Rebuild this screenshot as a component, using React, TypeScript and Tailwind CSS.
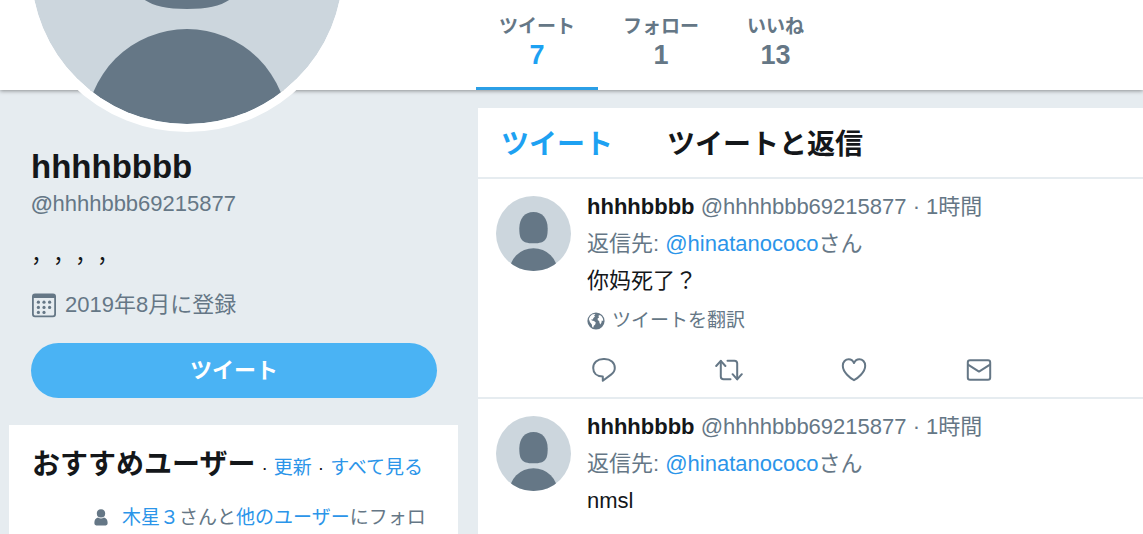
import React from "react";

function DefaultAvatar({ className, label }: { className: string; label: string }) {
  const id = React.useId();
  return (
    <svg viewBox="0 0 312 312" className={className} role="img" aria-label={label}>
      <clipPath id={id}>
        <circle cx="156" cy="156" r="156" />
      </clipPath>
      <g clipPath={`url(#${id})`}>
        <rect width="312" height="312" fill="#ccd6dd" />
        <path
          d="M156 67C193 67 215 95 215 134C215 176 209 197 156 197C103 197 97 176 97 134C97 95 119 67 156 67Z"
          fill="#657786"
        />
        <circle cx="156" cy="318" r="101" fill="#657786" />
      </g>
    </svg>
  );
}

const calendarRows = [
  { y: 10.2, xs: [7.4, 13, 18.6] },
  { y: 15.4, xs: [7.4, 13, 18.6] },
  { y: 20.4, xs: [7.4, 13] },
];

function CalendarIcon() {
  return (
    <svg viewBox="0 0 26 26" className="size-[26px] shrink-0" fill="#657786" aria-hidden="true">
      <path
        fillRule="evenodd"
        d="M4 1.5H22Q25 1.5 25 4.5V22.3Q25 25.3 22 25.3H4Q1 25.3 1 22.3V4.5Q1 1.5 4 1.5ZM2.8 6V22Q2.8 23.6 4.4 23.6H21.6Q23.2 23.6 23.2 22V6Z"
      />
      {calendarRows.map(({ y, xs }) => xs.map((x) => <circle key={`${x}-${y}`} cx={x} cy={y} r="1.6" />))}
    </svg>
  );
}

function GlobeIcon() {
  return (
    <svg viewBox="0 0 18 18" className="size-[18px] shrink-0" aria-hidden="true">
      <circle cx="9" cy="9" r="8.6" fill="#657786" />
      <path
        fill="#fff"
        d="M1.8 7L3 4.4L5 2.6L7.4 2L8.4 2.8L7 3.6L8 4.6L6.4 6L5.8 7.4L4.4 7.2L4.8 8.6L7 9L8.8 10.4L8.2 12.4L6.8 13.8L6.2 15.8L5.2 15L4.8 12.4L3 10.2ZM11.4 3.8L13 3L14.8 4.6L16 6.8L16.2 9L14.8 8.6L14.4 10.8L13.2 12.4L12.4 10.6L12.2 9L10.8 8.2L10.6 6.6L12 5.6Z"
      />
    </svg>
  );
}

const actionIcons: { label: string; paths: string[] }[] = [
  {
    label: "返信",
    paths: [
      "M13.5 3H14.5C20.7 3 24.8 6.8 24.8 12C24.8 14.8 23.4 16.9 21 18.6L12.8 24.8V20.4C6.5 20.4 3.2 16.8 3.2 12C3.2 6.8 7.3 3 13.5 3Z",
    ],
  },
  {
    label: "リツイート",
    paths: ["M1.2 10L5.8 4.8L10.4 10", "M5.8 5V20.5Q5.8 23.3 8.6 23.3H15.5", "M12.5 4.8H19.4Q22.2 4.8 22.2 7.6V23", "M17.6 18.2L22.2 23.4L26.8 18.2"],
  },
  {
    label: "いいね",
    paths: ["M14 24.2C10.5 22.4 2.8 16.4 2.8 9.8C2.8 5.8 5.5 3.2 8.7 3.2C11 3.2 12.9 4.6 14 7C15.1 4.6 17 3.2 19.3 3.2C22.5 3.2 25.2 5.8 25.2 9.8C25.2 16.4 17.5 22.4 14 24.2Z"],
  },
  {
    label: "ダイレクトメッセージ",
    paths: ["M5 4.2H23Q25.2 4.2 25.2 6.4V21.6Q25.2 23.8 23 23.8H5Q2.8 23.8 2.8 21.6V6.4Q2.8 4.2 5 4.2Z", "M3 8.6L14 15.6L25 8.6"],
  },
];

function TweetActions() {
  return (
    <div className="flex">
      {actionIcons.map(({ label, paths }) => (
        <div key={label} className="w-[125px]">
          <button type="button" aria-label={label} className="block pl-[3px]">
            <svg
              viewBox="0 0 28 28"
              className="size-7"
              fill="none"
              stroke="#657786"
              strokeWidth="2"
              strokeLinecap="round"
              strokeLinejoin="round"
            >
              {paths.map((d) => (
                <path key={d} d={d} />
              ))}
            </svg>
          </button>
        </div>
      ))}
    </div>
  );
}

function Tweet({ text, translate }: { text: string; translate?: boolean }) {
  return (
    <article className="flex gap-4 border-b-2 border-[#e6ecf0] bg-white px-[18px] pt-[9px] pb-[13px]">
      <DefaultAvatar className="mt-2 size-[75px] shrink-0" label="hhhhbbbb" />
      <div className="min-w-0 flex-1 text-[22px] leading-[37px] text-[#657786]">
        <div className="whitespace-nowrap">
          <a href="#user" className="font-bold text-[#14171a]">hhhhbbbb</a>{" "}
          <span>@hhhhbbb69215877</span> · <a href="#status">1時間</a>
        </div>
        <div className="whitespace-nowrap">
          返信先: <a href="#reply" className="text-[#2b95e9]">@hinatanococo</a>さん
        </div>
        <p className="text-[#14171a]">{text}</p>
        {translate && (
          <button type="button" className="mt-[3px] flex items-center gap-[7px] text-[19px] leading-[37px]">
            <GlobeIcon />
            ツイートを翻訳
          </button>
        )}
        <div className="mt-[17px]">
          <TweetActions />
        </div>
      </div>
    </article>
  );
}

const stats = [
  { label: "ツイート", value: 7, active: true },
  { label: "フォロー", value: 1, active: false },
  { label: "いいね", value: 13, active: false },
];

export default function App() {
  return (
    <div className="h-screen overflow-hidden bg-[#e6ecf0] font-['Liberation_Sans','Noto_Sans_CJK_JP','Noto_Sans_CJK_SC',sans-serif] text-[#14171a]">
      <header className="relative bg-white pl-[476px] shadow-[0_1px_4px_rgba(0,0,0,0.4)]">
        <DefaultAvatar
          className="absolute -bottom-[42px] left-[23px] size-[328px] rounded-full border-8 border-white"
          label="hhhhbbbb"
        />
        <nav className="flex gap-[2px]">
          {stats.map((s) => (
            <a
              key={s.label}
              href="#stats"
              className={`flex flex-col items-center border-b-[3px] px-[23px] pt-[13px] pb-[17px] font-bold ${
                s.active ? "border-[#2b9fe6]" : "border-transparent"
              }`}
            >
              <span className="text-[19px] leading-7 text-[#657786]">{s.label}</span>
              <span className={`text-[27px] leading-[29px] ${s.active ? "text-[#1da1f2]" : "text-[#657786]"}`}>
                {s.value}
              </span>
            </a>
          ))}
        </nav>
      </header>

      <div className="grid grid-cols-[458px_1fr] gap-5">
        <aside className="pl-[9px] whitespace-nowrap">
          <div className="pt-[55px] pr-[21px] pl-[22px]">
            <h1 className="text-[33px] leading-[44px] font-bold">hhhhbbbb</h1>
            <p className="text-[22px] leading-[30px] text-[#657786]">
              <span className="font-bold">@</span>hhhhbbb69215877
            </p>
            <p className="mt-[22px] text-[22px] leading-7 [text-spacing-trim:space-all]">，，，，</p>
            <p className="mt-5 flex items-center gap-2 text-[22px] leading-8 text-[#657786]">
              <CalendarIcon />
              2019年8月に登録
            </p>
            <button
              type="button"
              className="mt-[22px] h-[55px] w-full rounded-full bg-[#4ab3f4] text-[22px] font-bold text-white"
            >
              ツイート
            </button>
          </div>

          <section className="mt-[27px] bg-white px-[23px] pt-5 pb-6">
            <div className="flex items-baseline gap-[6px] text-[19px] leading-10">
              <h2 className="text-[28px] font-bold">おすすめユーザー</h2>
              <span>·</span>
              <a href="#refresh" className="text-[#2b95e9]">更新</a>
              <span>·</span>
              <a href="#all" className="text-[#2b95e9]">すべて見る</a>
            </div>
            <div className="mt-[14px] flex items-center gap-[14px] pl-[62px] text-[19px] leading-8 text-[#657786]">
              <svg viewBox="0 0 14 18" className="h-[18px] w-[14px] shrink-0" fill="#657786" aria-hidden="true">
                <path d="M7 0.2C9.8 0.2 11.2 1.9 11.2 4.3C11.2 7.2 10 8.6 7 8.6C4 8.6 2.8 7.2 2.8 4.3C2.8 1.9 4.2 0.2 7 0.2ZM4 8.6Q7 10.4 10 8.6C12.4 9.3 13.6 11.2 13.6 13.6V14.6Q13.6 16.4 11.8 16.4H2.2Q0.4 16.4 0.4 14.6V13.6C0.4 11.2 1.6 9.3 4 8.6Z" />
              </svg>
              <p>
                <a href="#jupiter" className="text-[#2b95e9]">木星３</a>さんと
                <a href="#others" className="text-[#2b95e9]">他のユーザー</a>にフォロ
              </p>
            </div>
          </section>
        </aside>

        <main className="mt-[18px] min-w-0">
          <nav className="flex gap-[54px] border-b-2 border-[#e6ecf0] bg-white px-[23px] pt-4 pb-3 text-[28px] leading-[41px] font-bold whitespace-nowrap">
            <a href="#tweets" className="text-[#1da1f2]">ツイート</a>
            <a href="#with-replies">ツイートと返信</a>
          </nav>
          <Tweet text="你妈死了？" translate />
          <Tweet text="nmsl" />
        </main>
      </div>
    </div>
  );
}
